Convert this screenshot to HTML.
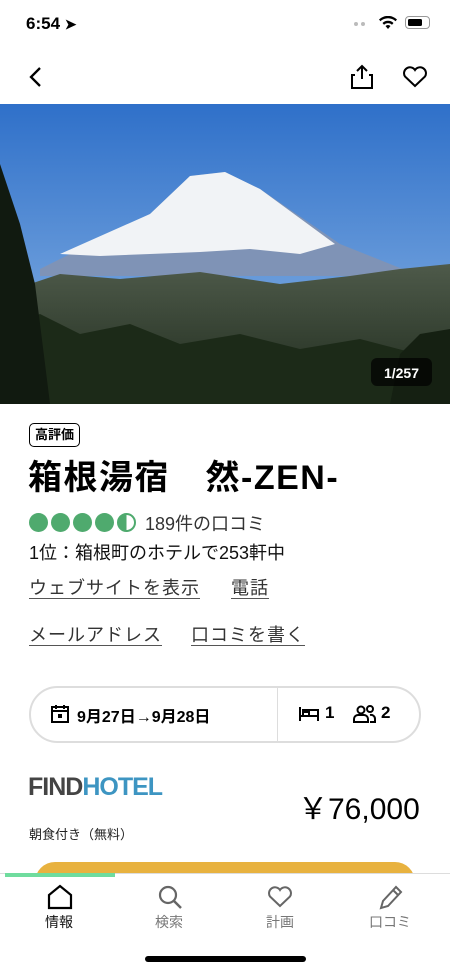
<!DOCTYPE html>
<html><head><meta charset="utf-8"><style>
*{margin:0;padding:0;box-sizing:border-box}
body{width:450px;height:972px;overflow:hidden;background:#fff;font-family:"Liberation Sans","Noto Sans CJK JP",sans-serif;color:#000;position:relative}
.abs{position:absolute}
.link{color:#333;font-size:18px;letter-spacing:1px;text-decoration:underline;text-underline-offset:4px;text-decoration-color:#555}
</style></head><body>
<div class="abs" style="left:26px;top:14px;font-size:17px;font-weight:bold">6:54 <span style="font-size:14px">➤</span></div>
<div class="abs" style="left:354px;top:22px;width:4px;height:4px;border-radius:2px;background:#bbb;box-shadow:7px 0 #bbb"></div>
<svg class="abs" style="left:378px;top:16px" width="20" height="14" viewBox="0 0 20 14"><path d="M10 13l-2.5-3a4 4 0 0 1 5 0z M4.5 7a8 8 0 0 1 11 0l-1.5 1.7a6 6 0 0 0-8 0z M1 3.5a13 13 0 0 1 18 0l-1.5 1.7a11 11 0 0 0-15 0z" fill="#000"/></svg>
<div class="abs" style="left:405px;top:16px;width:25px;height:13px;border:1.5px solid #999;border-radius:4px"><div style="margin:1.5px;width:14px;height:7px;background:#000;border-radius:1.5px"></div></div>
<svg class="abs" style="left:26px;top:66px" width="20" height="22"><path d="M14 2L5 11l9 9" stroke="#000" stroke-width="2.3" fill="none"/></svg>
<svg class="abs" style="left:350px;top:64px" width="24" height="26"><path d="M12 15V2M7 7l5-5 5 5M5 11H2v13h20V11h-3" stroke="#000" stroke-width="2" fill="none"/></svg>
<svg class="abs" style="left:402px;top:66px" width="26" height="22"><path d="M13 20L3 10.5A5.5 5.5 0 0 1 13 4a5.5 5.5 0 0 1 10 6.5z" stroke="#000" stroke-width="2" fill="none"/></svg>
<svg class="abs" style="left:0;top:104px" width="450" height="300" viewBox="0 0 450 300">
<defs><linearGradient id="sk" x1="0" y1="0" x2="0" y2="1"><stop offset="0" stop-color="#2f70c9"/><stop offset="1" stop-color="#8fb8e6"/></linearGradient>
<linearGradient id="gr" x1="0" y1="0" x2="0" y2="1"><stop offset="0" stop-color="#4e5a4a"/><stop offset="1" stop-color="#1e2a1c"/></linearGradient></defs>
<rect width="450" height="300" fill="url(#sk)"/>
<path d="M40 165L150 110L190 72L225 68L260 85L340 140L420 172H40z" fill="#7f93b6"/>
<path d="M60 150L150 110L190 72L225 68L260 85L335 140L300 150L250 145L200 148L150 150L100 152z" fill="#f1f3f6"/>
<path d="M0 190L60 170L120 175L200 168L280 180L350 172L400 165L450 160V300H0z" fill="url(#gr)"/>
<path d="M0 225L40 210L80 230L130 220L180 240L240 230L300 245L360 235L410 248L450 238V300H0z" fill="#1c2a18"/>
<path d="M0 60L20 120L35 180L50 300H0z" fill="#111a10"/>
<path d="M400 250L420 230L450 225V300H390z" fill="#152012"/>
<rect x="371" y="254" width="61" height="28" rx="6" fill="rgba(0,0,0,.7)"/>
<text x="401.5" y="274" fill="#fff" font-size="14" font-weight="bold" text-anchor="middle" font-family="Liberation Sans">1/257</text>
</svg>
<div class="abs" style="left:29px;top:423px;border:1.3px solid #000;border-radius:5px;padding:2px 5px;font-size:13px;font-weight:bold;line-height:18px">高評価</div>
<div class="abs" style="left:28px;top:455px;font-size:34px;font-weight:bold;line-height:46px;white-space:nowrap;letter-spacing:1.5px">箱根湯宿　然-ZEN-</div>
<div class="abs" style="left:29px;top:513px;display:flex;gap:3px">
<div style="width:19px;height:19px;border-radius:50%;background:#4faa6e"></div><div style="width:19px;height:19px;border-radius:50%;background:#4faa6e"></div><div style="width:19px;height:19px;border-radius:50%;background:#4faa6e"></div><div style="width:19px;height:19px;border-radius:50%;background:#4faa6e"></div><div style="width:19px;height:19px;border-radius:50%;border:2px solid #4faa6e;background:linear-gradient(90deg,#4faa6e 50%,#fff 50%)"></div></div>
<div class="abs" style="left:145px;top:510px;font-size:18px;color:#333">189件の口コミ</div>
<div class="abs" style="left:29px;top:539px;font-size:18px;color:#111">1位：箱根町のホテルで253軒中</div>
<div class="abs link" style="left:29px;top:574px">ウェブサイトを表示</div>
<div class="abs link" style="left:231px;top:574px">電話</div>
<div class="abs link" style="left:29px;top:621px">メールアドレス</div>
<div class="abs link" style="left:191px;top:621px">口コミを書く</div>
<div class="abs" style="left:29px;top:686px;width:392px;height:57px;border:2px solid #ddd;border-radius:29px"></div>
<div class="abs" style="left:277px;top:688px;width:1px;height:53px;background:#ddd"></div>
<svg class="abs" style="left:50px;top:704px" width="20" height="20"><rect x="2" y="3" width="16" height="15" fill="none" stroke="#000" stroke-width="2"/><path d="M6 1v4M14 1v4M2 7h16" stroke="#000" stroke-width="2"/><rect x="8" y="10" width="4" height="4" fill="#000"/></svg>
<div class="abs" style="left:77px;top:703px;font-size:16px;font-weight:bold">9月27日→9月28日</div>
<svg class="abs" style="left:298px;top:706px" width="22" height="16"><path d="M2 1v14M2 10h18v5M20 10V4H5v6M5 6h6v4" stroke="#000" stroke-width="2" fill="none"/></svg>
<div class="abs" style="left:325px;top:703px;font-size:17px;font-weight:bold">1</div>
<svg class="abs" style="left:353px;top:704px" width="24" height="20"><circle cx="8" cy="6" r="3.5" fill="none" stroke="#000" stroke-width="2"/><circle cx="17" cy="5" r="3" fill="none" stroke="#000" stroke-width="2"/><path d="M1 18v-3a4 4 0 0 1 4-4h6a4 4 0 0 1 4 4v3zM17 11a4 4 0 0 1 5 4v3h-5" fill="none" stroke="#000" stroke-width="2"/></svg>
<div class="abs" style="left:381px;top:703px;font-size:17px;font-weight:bold">2</div>
<div class="abs" style="left:28px;top:773px;font-size:25px;font-weight:bold;letter-spacing:-1px"><span style="color:#444">FIND</span><span style="color:#3d95c2">HOTEL</span></div>
<div class="abs" style="left:298px;top:784px;font-size:30px;color:#000">￥76,000</div>
<div class="abs" style="left:29px;top:824px;font-size:13px;color:#222">朝食付き（無料）</div>
<div class="abs" style="left:35px;top:862px;width:380px;height:40px;border-radius:20px;background:#e8b23f"></div>
<div class="abs" style="left:0;top:873px;width:450px;height:99px;background:#fff;border-top:1px solid #ddd"></div>
<div class="abs" style="left:5px;top:873px;width:110px;height:4px;background:#6fdc9e"></div>
<svg class="abs" style="left:47px;top:884px" width="26" height="26"><path d="M2 24V11L13 2l11 9v13z" fill="none" stroke="#000" stroke-width="2.2"/></svg>
<svg class="abs" style="left:157px;top:884px" width="26" height="26"><circle cx="11" cy="11" r="8" fill="none" stroke="#666" stroke-width="2.2"/><path d="M17 17l7 7" stroke="#666" stroke-width="2.5"/></svg>
<svg class="abs" style="left:267px;top:886px" width="26" height="22"><path d="M13 20L3 10.5A5.5 5.5 0 0 1 13 4a5.5 5.5 0 0 1 10 6.5z" stroke="#666" stroke-width="2" fill="none"/></svg>
<svg class="abs" style="left:378px;top:884px" width="26" height="26"><path d="M3 24l2-7L18 3l5 5L10 22zM15 6l5 5" stroke="#666" stroke-width="2" fill="none"/></svg>
<div class="abs" style="left:45px;top:912px;font-size:14px;color:#111">情報</div>
<div class="abs" style="left:155px;top:912px;font-size:14px;color:#777">検索</div>
<div class="abs" style="left:266px;top:912px;font-size:14px;color:#777">計画</div>
<div class="abs" style="left:369px;top:912px;font-size:14px;color:#777">口コミ</div>
<div class="abs" style="left:145px;top:956px;width:161px;height:6px;border-radius:3px;background:#000"></div>
</body></html>
